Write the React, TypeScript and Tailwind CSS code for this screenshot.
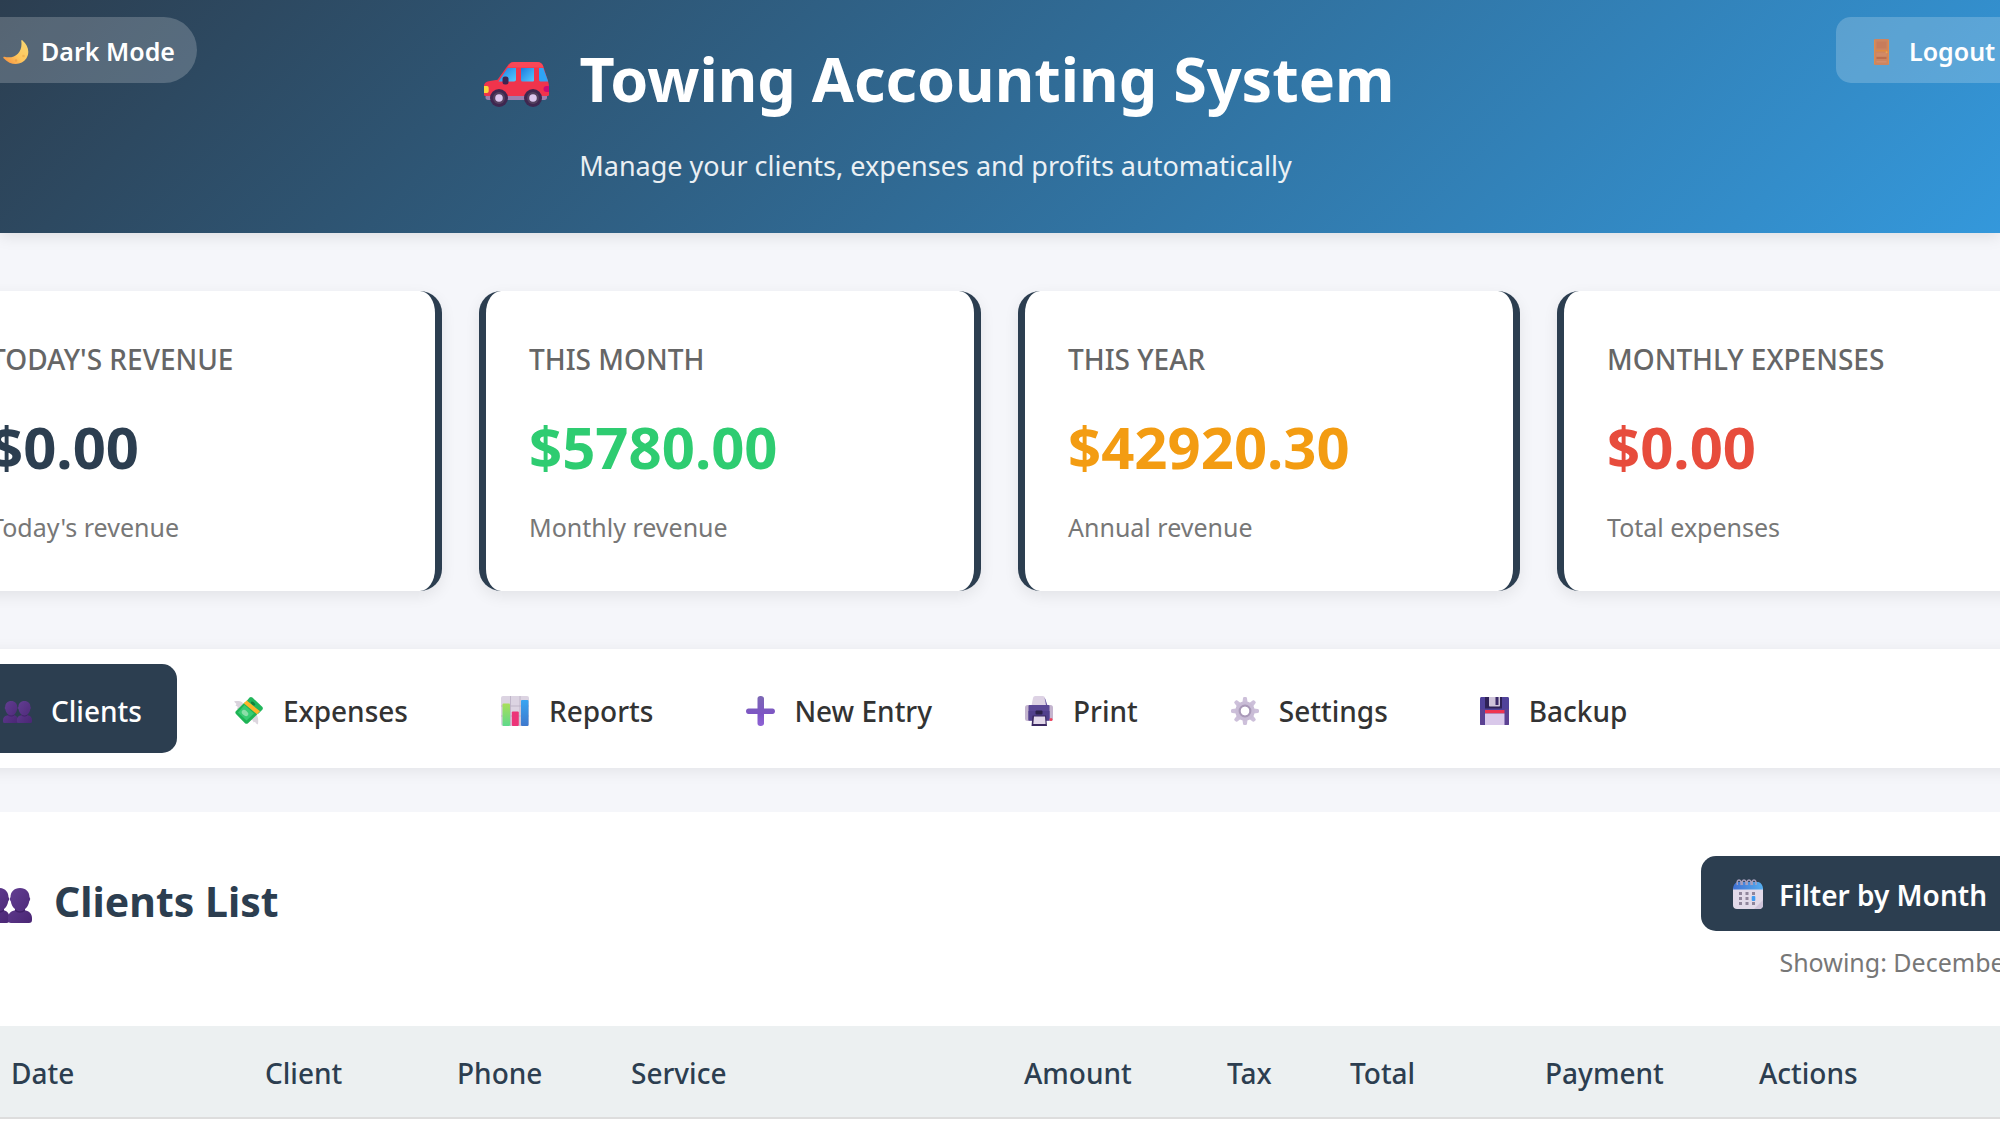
import type { ReactNode } from "react";

type IconProps = { className?: string };

function Moon({ className }: IconProps) {
  return (
    <svg viewBox="0 0 26 25" className={className} aria-hidden="true">
      <defs>
        <linearGradient id="moon" x1="1" y1="0" x2="0" y2="1">
          <stop offset="0" stopColor="#f6d873" />
          <stop offset=".55" stopColor="#ffc75e" />
          <stop offset="1" stopColor="#f58a3a" />
        </linearGradient>
      </defs>
      <path d="M19.5.4c5.6 4.500 7.700 12.200 3.800 18.200C19 25.200 8 26.500.6 18.200c-.7-.9-.2-1.700.8-1.400C12 19.300 19.800 12.500 18.300 1.200c-.1-1 .5-1.400 1.200-.8Z" fill="url(#moon)" />
      <circle cx="20.500" cy="16" r="1.300" fill="#f2b552" />
      <circle cx="13" cy="20.500" r="1.200" fill="#f0a347" />
    </svg>
  );
}

function Car({ className }: IconProps) {
  return (
    <svg viewBox="0 0 65 45" className={className} aria-hidden="true">
      <defs>
        <linearGradient id="glass" x1="0" y1="0" x2="1" y2="1">
          <stop offset="0" stopColor="#1b7be0" />
          <stop offset="1" stopColor="#55cbff" />
        </linearGradient>
      </defs>
      <path d="M2 31h61v4.500c0 1.500-1 2.500-2.500 2.500H4c-1.500 0-2.500-1-2.500-2.500Z" fill="#9c7fae" />
      <path d="M24.500 2.500C26 .8 27.500 0 30 0h23c3 0 5.200 1.200 6.200 4L64 19c.7 2 1 4 1 6v7.500c0 1-.8 1.500-1.700 1.500H1.700C.8 34 0 33.500 0 32.500V24c0-3 2.500-4.500 6-5l7.500-1.200Z" fill="#f0344c" />
      <path d="M25.500 2.400C27 .8 28.200 0 30 0h23c3 0 5.200 1.200 6 4l.4 1.500H23.300Z" fill="#fa4757" />
      <path d="M23.500 6H32v11.500c0 1-.8 2-2 2H14.500Z" fill="url(#glass)" />
      <path d="M37 6h13v12c0 1-.6 1.500-1.500 1.500h-10c-1 0-1.500-.6-1.500-1.500Z" fill="url(#glass)" />
      <path d="M55 6h4.300l4.900 13.500H57c-1.200 0-2-.8-2-1.800Z" fill="#2fa4f5" />
      <rect x="18.500" y="14.500" width="6" height="8" rx="2.500" fill="#3d2450" />
      <path d="M0 24h3c1 0 1.700.9 1.700 2v3c0 1-.8 2-1.700 2H0Z" fill="#f9d83c" />
      <path d="M65 24h-2.500c-1.800 0-3 1.300-3 3s1.200 3 3 3H65Z" fill="#cc0a72" />
      <circle cx="15" cy="36" r="9" fill="#3f2750" />
      <circle cx="49" cy="36" r="9" fill="#3f2750" />
      <circle cx="15" cy="36" r="6" fill="#54405f" />
      <circle cx="49" cy="36" r="6" fill="#54405f" />
      <circle cx="15" cy="36" r="3.800" fill="#dcc6ee" />
      <circle cx="49" cy="36" r="3.800" fill="#dcc6ee" />
    </svg>
  );
}

function Door({ className }: IconProps) {
  return (
    <svg viewBox="0 0 15 26" className={className} aria-hidden="true">
      <rect width="15" height="26" rx="1" fill="#cd8560" />
      <path d="M0 1h1.200v24H0ZM13.800 1H15v24h-1.200Z" fill="#df8b4e" />
      <path d="M2.500 2.500h10v7h-10Z" fill="#c77c5c" />
      <path d="M2 11h11v1.500H2Z" fill="#e0893f" />
      <path d="M2.500 14h10v3h-10Z" fill="#d28a66" />
      <path d="M2.500 18h10v2h-10Z" fill="#bd6d4d" />
      <path d="M2.500 22h10v1.500h-10Z" fill="#d48e6d" />
      <circle cx="12.600" cy="13.300" r="1" fill="#f0a34c" />
    </svg>
  );
}

function People({ className }: IconProps) {
  return (
    <svg viewBox="0 0 46 35" className={className} aria-hidden="true">
      <defs>
        <linearGradient id="bust" x1="0" y1="0" x2="1" y2="1">
          <stop offset="0" stopColor="#633f93" />
          <stop offset="1" stopColor="#4a2674" />
        </linearGradient>
      </defs>
      <path d="M13 0c6 0 9.500 4 9.500 9.300.9.500 1 3.200-.2 3.700-.7 4-2.300 6.500-4.300 8v1.500c3.500.6 5.500 3.500 5.500 7.500v2c0 2-1 3-3 3H3c-2 0-3-1-3-3v-2c0-4 3-7 8-7.500V21c-2-1.500-3.600-4-4.300-8-1.200-.5-1.100-3.200-.2-3.700C3.500 4 7 0 13 0Z" fill="url(#bust)" />
      <path d="M34 0c6 0 9.500 4 9.500 9.300.9.500 1 3.200-.2 3.700-.7 4-2.300 6.500-4.300 8v1.500c4.500.6 7 3.500 7 7.500v2c0 2-1 3-3 3H25c-2 0-3-1-3-3v-2c0-4 2.500-7 7-7.500V21c-2-1.500-3.600-4-4.300-8-1.200-.5-1.100-3.200-.2-3.700C24.500 4 28 0 34 0Z" fill="url(#bust)" />
      <path d="M8 22c3 2.500 7 2.500 10 0M29 22c3 2.500 7 2.500 10 0" stroke="#3f2068" strokeWidth="1.500" fill="none" />
    </svg>
  );
}

function Money({ className }: IconProps) {
  return (
    <svg viewBox="0 0 29 28" className={className} aria-hidden="true">
      <path d="M0 4.500c3-.8 6-.6 8.500 1L10 9l-5 5-2-2.500 1-1.500-2.500-1.500 1-1.500Z" fill="#d9d3dc" />
      <path d="M17 19l5-3 1.500 3.500c1 2.500.8 5 .5 8l-2-1-1-1.700-1.200.8-1.300-2.300L17 23Z" fill="#dcd6de" />
      <path d="M15.500.6c.9-.8 2-.8 2.900 0l9.800 9.200c.9.900.9 2 .1 2.900l-4 4-13-11Z" fill="#22b65b" />
      <path d="M10.500 5.500l13.500 11-10 9.700c-1 .8-2 .8-3 0L2 17c-.9-.9-.9-2 0-2.900Z" fill="#1eb455" />
      <path d="M10.500 8l9.500 8.500-7.500 7L4 15.500Z" fill="#39cb72" />
      <ellipse cx="11" cy="16" rx="3.700" ry="2.500" transform="rotate(42 11 16)" fill="#8bdfa8" />
      <ellipse cx="19" cy="6.500" rx="2.500" ry="1.500" transform="rotate(42 19 6.500)" fill="#12803e" />
      <path d="M9.700 6.200l3-2.700L26 14.300l-3 3Z" fill="#ffb42a" />
    </svg>
  );
}

function Chart({ className }: IconProps) {
  return (
    <svg viewBox="0 0 28 30" className={className} aria-hidden="true">
      <defs>
        <linearGradient id="barGreen" x1="0" y1="0" x2="0" y2="1">
          <stop offset="0" stopColor="#a8df5a" />
          <stop offset="1" stopColor="#5fd98b" />
        </linearGradient>
        <linearGradient id="barBlue" x1="0" y1="0" x2="0" y2="1">
          <stop offset="0" stopColor="#37a5f2" />
          <stop offset="1" stopColor="#3f78cc" />
        </linearGradient>
      </defs>
      <rect width="28" height="30" rx="2" fill="#dcd4e2" />
      <path d="M9.500 0v30M19 0v30M0 10h28M0 20h28" stroke="#b9afc3" strokeWidth=".8" />
      <rect x="1.500" y="7.500" width="7.500" height="22.500" rx="1" fill="url(#barGreen)" />
      <rect x="10.800" y="15.500" width="7" height="14.500" rx="1" fill="#ec3479" />
      <rect x="20" y="4" width="7.500" height="26" rx="1" fill="url(#barBlue)" />
    </svg>
  );
}

function Plus({ className }: IconProps) {
  return (
    <svg viewBox="0 0 29 30" className={className} aria-hidden="true">
      <defs>
        <linearGradient id="plus" x1="0" y1="0" x2="0" y2="1">
          <stop offset="0" stopColor="#7c68b4" />
          <stop offset=".6" stopColor="#7d55c4" />
          <stop offset="1" stopColor="#8f63d6" />
        </linearGradient>
      </defs>
      <path d="M11.500 2.500C11.500 1 12.700 0 14.200 0h.8c1.500 0 3 1 3 2.500V12.500h8.500c1.500 0 2.500 1.200 2.500 2.800s-1 2.700-2.500 2.700H18v9.500c0 1.500-1.500 2.500-3 2.500h-.8c-1.500 0-2.700-1-2.700-2.500V18h-9C1 18 0 16.900 0 15.300s1-2.800 2.500-2.800h9Z" fill="url(#plus)" />
    </svg>
  );
}

function Printer({ className }: IconProps) {
  return (
    <svg viewBox="0 0 28 30" className={className} aria-hidden="true">
      <path d="M6.500 9.500 8 2c.3-1.300 1-2 2.500-2h7c1.500 0 2.200.7 2.500 2l1.500 7.500Z" fill="#ddd2e4" />
      <path d="M20.500 3.500 22.500 9.500H21L19.500 1.500Z" fill="#6b5aa5" />
      <rect y="9" width="28" height="16" rx="2.500" fill="#c4b5cf" />
      <rect x="3.500" y="9" width="21" height="15.500" rx="1" fill="#5a4795" />
      <path d="M3.500 15H24.500v9.500h-21Z" fill="#51408c" />
      <rect x="10.500" y="14.500" width="7" height="4" rx="1" fill="#2b2149" />
      <path d="M7.500 19.500h13.500L22 30H6.500Z" fill="#3b2962" />
      <path d="M9 20.500h11l.6 7.500H8.300Z" fill="#e2d8ea" />
      <circle cx="26" cy="23.500" r="1.500" fill="#f0405b" />
    </svg>
  );
}

function Gear({ className }: IconProps) {
  const teeth = [0, 45, 90, 135, 180, 225, 270, 315];
  return (
    <svg viewBox="0 0 28 28" className={className} aria-hidden="true">
      {teeth.map((angle) => (
        <path key={angle} d="M11.200 7 12 1.200c.1-.8.700-1.200 1.400-1.200h1.200c.7 0 1.300.4 1.400 1.200l.8 5.800Z" transform={`rotate(${angle} 14 14)`} fill="#cdc0da" />
      ))}
      <circle cx="14" cy="14" r="7.700" fill="none" stroke="#c9bcd6" strokeWidth="4.200" />
      <circle cx="14" cy="14" r="5.300" fill="none" stroke="#a999b8" strokeWidth="2.200" />
      <circle cx="14" cy="14" r="4.200" fill="#fff" />
    </svg>
  );
}

function Floppy({ className }: IconProps) {
  return (
    <svg viewBox="0 0 29 28" className={className} aria-hidden="true">
      <path d="M1.500 0h26c1 0 1.500.6 1.500 1.500v25c0 1-.5 1.500-1.500 1.500h-26C.6 28 0 27.500 0 26.500v-25C0 .6.600 0 1.500 0Z" fill="#50429a" />
      <path d="M0 12h4.500v16h-3C.6 28 0 27.500 0 26.500ZM24.500 12H29v14.500c0 1-.5 1.500-1.500 1.500h-3Z" fill="#5c4192" />
      <path d="M5 0h17v11.500H5Z" fill="#2f2257" />
      <path d="M9 0h11v8.500c0 .6-.4 1-1 1h-9c-.6 0-1-.4-1-1Z" fill="#cfc4da" />
      <path d="M15.500 0h3v8h-3Z" fill="#3b2a68" />
      <path d="M5 13h19.500v3.500H5Z" fill="#ef3350" />
      <path d="M5 16.500h19.500V28H5Z" fill="#d9c8ea" />
    </svg>
  );
}

function Calendar({ className }: IconProps) {
  return (
    <svg viewBox="0 0 30 30" className={className} aria-hidden="true">
      <defs>
        <linearGradient id="cal" x1="0" y1="0" x2="1" y2="0">
          <stop offset="0" stopColor="#3f6fd1" />
          <stop offset="1" stopColor="#55aef0" />
        </linearGradient>
      </defs>
      <path d="M0 9h30v17c0 2.500-1.500 4-4 4H4c-2.500 0-4-1.500-4-4Z" fill="#e2dae9" />
      <path d="M4.500 3h21c3 1 4.500 3.500 4.500 7.500H0C0 6.500 1.500 4 4.500 3Z" fill="url(#cal)" />
      <path d="M4.500 6c-1-3 0-5 1.500-5s2.500 2 2 5M9.500 6c-1-3 0-5 1.500-5s2.500 2 2 5M14.500 6c-1-3 0-5 1.500-5s2.500 2 2 5M19.500 6c-1-3 0-5 1.500-5s2.500 2 2 5" fill="none" stroke="#a79fbd" strokeWidth="1.500" />
      <path d="M6 13h3v3H6ZM12.500 13h3v3h-3ZM19 13h3v3h-3ZM6 18h3v3H6ZM12.500 18h3v3h-3ZM6 23h3v3H6ZM12.500 23h3v3h-3ZM19 23h3v3h-3Z" fill="#8f859b" />
      <rect x="18.700" y="17" width="3.600" height="5" rx="1" fill="#3f9af0" />
      <path d="M30 21v5c0 2.500-1.500 4-4 4h-5Z" fill="#cfc4da" />
    </svg>
  );
}

const stats = [
  { label: "TODAY'S REVENUE", value: "$0.00", note: "Today's revenue", color: "text-[#2c3e50]" },
  { label: "THIS MONTH", value: "$5780.00", note: "Monthly revenue", color: "text-[#2ecc71]" },
  { label: "THIS YEAR", value: "$42920.30", note: "Annual revenue", color: "text-[#f39c12]" },
  { label: "MONTHLY EXPENSES", value: "$0.00", note: "Total expenses", color: "text-[#e74c3c]" },
];

const tabs: { label: string; icon: ReactNode; active?: boolean }[] = [
  { label: "Clients", icon: <People className="mt-1 w-[29px]" />, active: true },
  { label: "Expenses", icon: <Money className="w-[29px]" /> },
  { label: "Reports", icon: <Chart className="w-[28px]" /> },
  { label: "New Entry", icon: <Plus className="w-[29px]" /> },
  { label: "Print", icon: <Printer className="w-[28px]" /> },
  { label: "Settings", icon: <Gear className="w-[28px]" /> },
  { label: "Backup", icon: <Floppy className="w-[29px]" /> },
];

const columns = [
  { label: "Date", width: "w-[254px]" },
  { label: "Client", width: "w-[192px]" },
  { label: "Phone", width: "w-[174px]" },
  { label: "Service", width: "w-[393px]" },
  { label: "Amount", width: "w-[203px]" },
  { label: "Tax", width: "w-[123px]" },
  { label: "Total", width: "w-[195px]" },
  { label: "Payment", width: "w-[214px]" },
  { label: "Actions", width: "" },
];

export default function App() {
  return (
    <div className="h-screen overflow-hidden bg-[#f5f6fa] font-['Noto_Sans',sans-serif] text-[#333]">
      <header className="flex h-[233px] items-start justify-between bg-[linear-gradient(135deg,#2c3e50,#3498db)] pt-[17px] text-white shadow-[0_3px_15px_rgba(0,0,0,0.1)]">
        <button className="-ml-[33px] flex h-[66px] w-[230px] shrink-0 items-center gap-3 rounded-full bg-white/20 pt-1 pl-9 text-[25px] font-semibold whitespace-nowrap">
          <Moon className="w-[26px]" />
          Dark Mode
        </button>
        <div className="flex flex-1 flex-col items-center pt-4 pr-[162px] whitespace-nowrap">
          <h1 className="flex items-center text-[61px] leading-[92px] font-bold">
            <span className="flex w-[103px] pt-2.5 pl-2">
              <Car className="w-[65px]" />
            </span>
            Towing Accounting System
          </h1>
          <p className="mt-[19px] text-[27px] leading-[44px] opacity-90">
            Manage your clients, expenses and profits automatically
          </p>
        </div>
        <button className="-mr-[30px] flex h-[66px] w-[194px] shrink-0 items-center gap-5 rounded-[15px] bg-white/20 pt-1 pl-[38px] text-[25px] font-semibold">
          <Door className="w-[15px]" />
          Logout
        </button>
      </header>

      <main className="-mr-[59px] -ml-[60px] pt-[58px]">
        <section className="grid grid-cols-4 gap-[37px]">
          {stats.map((s) => (
            <article
              key={s.label}
              className="h-[300px] rounded-[22px] border-x-[7px] border-[#2c3e50] bg-white px-[43px] py-[44px] whitespace-nowrap shadow-[0_5px_15px_rgba(0,0,0,0.08)]"
            >
              <h2 className="text-[28px] leading-[48px] font-medium text-[#666]">{s.label}</h2>
              <p className={`mt-6 mb-2 text-[58px] leading-[80px] font-bold ${s.color}`}>{s.value}</p>
              <p className="pt-2.5 text-[25px] leading-[44px] text-[#777]">{s.note}</p>
            </article>
          ))}
        </section>

        <nav className="mt-[58px] flex gap-[17px] bg-white px-[22px] py-[15px] whitespace-nowrap shadow-[0_3px_15px_rgba(0,0,0,0.08)]">
          {tabs.map((t) => (
            <button
              key={t.label}
              className={`flex h-[89px] items-center gap-[14px] rounded-[15px] px-[35px] pt-1 text-[28px] font-medium ${t.active ? "bg-[#2c3e50] text-white" : ""}`}
            >
              <span className="flex w-10 justify-center">{t.icon}</span>
              {t.label}
            </button>
          ))}
        </nav>

        <section className="mt-[44px] h-[400px] bg-white px-[44px] pt-[44px] whitespace-nowrap">
          <div className="mb-[44px] flex h-[126px] items-start justify-between">
            <h2 className="flex items-center gap-[22px] pt-3 text-[41px] leading-[66px] font-bold text-[#2c3e50]">
              <People className="mt-2 ml-[2px] w-[46px]" />
              Clients List
            </h2>
            <div className="flex flex-col items-end">
              <button className="flex h-[75px] items-center gap-4 rounded-[15px] bg-[#2c3e50] pr-7 pl-8 text-[28px] font-semibold text-white">
                <Calendar className="w-[30px]" />
                <span className="pt-[3px]">Filter by Month</span>
              </button>
              <p className="mt-[11px] text-[25px] leading-[40px] text-[#777]">Showing: December</p>
            </div>
          </div>
          <table className="w-full table-fixed border-collapse">
            <thead>
              <tr className="border-b-2 border-[#ddd] bg-[#ecf0f1]">
                {columns.map((c) => (
                  <th key={c.label} scope="col" className={`h-[92px] px-[27px] pt-0.5 text-left text-[28px] font-medium text-[#2c3e50] ${c.width}`}>
                    {c.label}
                  </th>
                ))}
              </tr>
            </thead>
          </table>
        </section>
      </main>
    </div>
  );
}
